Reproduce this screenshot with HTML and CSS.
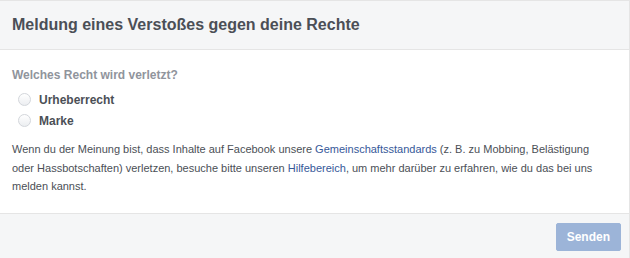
FILE: index.html
```html
<!DOCTYPE html>
<html lang="de">
<head>
  <meta charset="UTF-8">
  <title>Meldung</title>
  <link rel="stylesheet" href="styles.css">
</head>
<body>
  <div class="dialog">
    <div class="dialog-header">
      <h2>Meldung eines Verstoßes gegen deine Rechte</h2>
    </div>

    <div class="dialog-body">
      <div class="question">Welches Recht wird verletzt?</div>
      <label class="choice"><span class="radio"></span>Urheberrecht</label>
      <label class="choice"><span class="radio"></span>Marke</label>

      <p class="note">
        Wenn du der Meinung bist, dass Inhalte auf Facebook unsere <a href="#">Gemeinschaftsstandards</a> (z. B. zu Mobbing, Belästigung
        oder Hassbotschaften) verletzen, besuche bitte unseren <a href="#">Hilfebereich</a>, um mehr darüber zu erfahren, wie du das bei uns
        melden kannst.
      </p>
    </div>

    <div class="dialog-footer">
      <button class="send-btn">Senden</button>
    </div>
  </div>
</body>
</html>
```

FILE: styles.css
```css
body {
  margin: 0;
  font-family: 'Liberation Sans', Arial, sans-serif;
  background-color: #fff;
  color: #4b4f56;
}

.dialog {
  width: 629px;
  height: 258px;
  border-right: 1px solid #e5e5e5;
  display: flex;
  flex-direction: column;
}

.dialog-header {
  background-color: #f5f6f7;
  border-top: 1px solid #e5e5e5;
  border-bottom: 1px solid #e5e5e5;
  height: 48px;
  padding: 0 12px;
  display: flex;
  align-items: center;
}

.dialog-header h2 {
  margin: 0;
  font-size: 16px;
  font-weight: bold;
  color: #4b4f56;
}

.dialog-body {
  padding: 18px 12px 0;
  flex: 1;
}

.question {
  font-size: 12px;
  font-weight: bold;
  color: #90949c;
  margin-bottom: 7px;
}

.choice {
  display: flex;
  align-items: center;
  gap: 8px;
  height: 21px;
  padding-left: 6px;
  font-size: 12px;
  font-weight: bold;
  color: #4b4f56;
}

.radio {
  width: 11px;
  height: 11px;
  border-radius: 50%;
  border: 1px solid #d3d6db;
  background: linear-gradient(#ffffff, #eceef1);
}

.note {
  width: 590px;
  margin: 9px 0 0;
  font-size: 11px;
  line-height: 18.5px;
  color: #4b4f56;
}

.note a {
  color: #365899;
  text-decoration: none;
}

.dialog-footer {
  background-color: #f5f6f7;
  border-top: 1px solid #e5e5e5;
  height: 44px;
  padding: 0 8px 0 12px;
  display: flex;
  align-items: center;
  justify-content: flex-end;
}

.send-btn {
  font-family: 'Liberation Sans', Arial, sans-serif;
  font-size: 12px;
  font-weight: bold;
  color: #fff;
  background-color: #9cb4d8;
  border: 1px solid #9cb4d8;
  border-radius: 2px;
  height: 28px;
  padding: 0 10px;
  margin-top: 2px;
}
```
